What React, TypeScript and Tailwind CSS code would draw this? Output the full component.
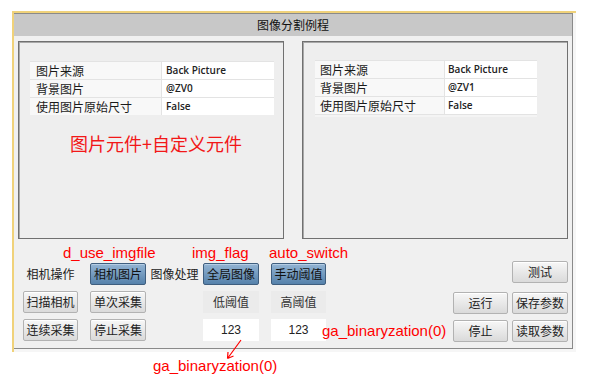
import React from "react";

const cjk = "font-['Noto_Sans_CJK_SC',sans-serif]";
const latin = "font-['Liberation_Sans','Noto_Sans_CJK_SC',sans-serif]";
const val = "font-['Open_Sans',sans-serif]";

function Btn({ children, blue, w = 55 }: { children: React.ReactNode; blue?: boolean; w?: number }) {
  const base = `h-[22px] flex items-center justify-center rounded-[2px] border text-[12px] leading-none ${cjk} bg-linear-to-b`;
  const color = blue
    ? "border-[#3f5e7e] from-[#93b4d3] to-[#5682ab] text-[#111] shadow-[inset_0_1px_0_#b4cde4]"
    : "border-[#b2b2b2] from-[#f7f7f7] to-[#dadada] text-[#222] shadow-[inset_0_1px_0_#ffffff]";
  return (
    <div className={`${base} ${color}`} style={{ width: w }}>
      {children}
    </div>
  );
}

function PropTable({ rows, nameW, width, pad, extra }: { rows: [string, string][]; nameW: number; width: number; pad: number; extra?: boolean }) {
  return (
    <div className="bg-[#e3e3e3] pt-[1px] flex flex-col gap-[1px]" style={{ width }}>
      {rows.map(([k, v]) => (
        <div key={k} className="flex h-[17px]">
          <div className={`bg-[#f8f8f8] text-[12px] leading-[17px] text-[#1a1a1a] ${cjk}`} style={{ width: nameW, paddingLeft: pad + 2 }}>
            {k}
          </div>
          <div className="w-[1px] bg-[#e3e3e3]" />
          <div className={`flex-1 bg-white text-[10px] font-semibold leading-[17px] text-[#222] ${val}`} style={{ paddingLeft: pad }}>
            {v}
          </div>
        </div>
      ))}
      {extra && <div className="h-[2px] overflow-hidden bg-[#f4f4f4]" />}
    </div>
  );
}

export default function App() {
  return (
    <div className="relative w-[596px] h-[382px] bg-white pl-[12px] pt-[11px]">
      <div className="w-[564px] h-[341px] border-t-2 border-l-2 border-[#f0d27a] bg-[#f6f6f6]">
        <div className="w-[559px] h-[336px] border-t border-r border-b border-[#8a8a8a] flex flex-col bg-[#f0f0f0]">
          <div className={`h-[22px] bg-[#c8c8c8] flex items-center justify-center text-[12px] text-[#111] ${cjk}`}>
            图像分割例程
          </div>
          <div className="flex flex-col pt-[5px] pl-[4px] pr-[4px]">
            <div className="flex gap-[18px]">
              <div className="w-[266px] h-[198px] border border-[#707070] shadow-[inset_1px_1px_0_#a8a8a8] bg-[#eeeeee] pl-[11px] pt-[19px] flex flex-col">
                <PropTable
                  width={244}
                  nameW={131}
                  pad={4}
                  rows={[
                    ["图片来源", "Back Picture"],
                    ["背景图片", "@ZV0"],
                    ["使用图片原始尺寸", "False"],
                  ]}
                />
                <div className={`mt-[18px] ml-[40px] text-[18px] leading-[20px] text-[#f21818] ${cjk}`}>
                  图片元件+自定义元件
                </div>
              </div>
              <div className="w-[266px] h-[198px] border border-[#707070] shadow-[inset_1px_1px_0_#a8a8a8] bg-[#eeeeee] pl-[12px] pt-[18px]">
                <PropTable
                  width={222}
                  nameW={129}
                  pad={3}
                  extra
                  rows={[
                    ["图片来源", "Back Picture"],
                    ["背景图片", "@ZV1"],
                    ["使用图片原始尺寸", "False"],
                  ]}
                />
              </div>
            </div>

            <div className="flex mt-[22px] pl-[5px]">
              <div className="mt-[2px] grid grid-cols-[67px_56px_57px_68px_55px] grid-rows-[22px_22px_22px] gap-y-[6px]">
                <div className={`w-[55px] flex items-center justify-center text-[12px] text-[#222] ${cjk}`}>相机操作</div>
                <Btn blue w={56}>相机图片</Btn>
                <div className={`flex items-center justify-center text-[12px] text-[#222] ${cjk}`}>图像处理</div>
                <Btn blue w={56}>全局图像</Btn>
                <Btn blue>手动阈值</Btn>

                <Btn>扫描相机</Btn>
                <Btn w={56}>单次采集</Btn>
                <div />
                <div className={`w-[56px] bg-[#ebebeb] flex items-center justify-center text-[12px] text-[#333] ${cjk}`}>低阈值</div>
                <div className={`w-[55px] bg-[#ebebeb] flex items-center justify-center text-[12px] text-[#333] ${cjk}`}>高阈值</div>

                <Btn>连续采集</Btn>
                <Btn w={56}>停止采集</Btn>
                <div />
                <div className={`w-[56px] bg-white flex items-center justify-center text-[12px] text-[#222] ${latin}`}>123</div>
                <div className={`w-[55px] bg-white flex items-center justify-center text-[12px] text-[#222] ${latin}`}>123</div>
              </div>
              <div className="flex-1" />
              <div className="flex flex-col">
                <div className="flex justify-end">
                  <Btn w={56}>测试</Btn>
                </div>
                <div className="flex gap-[4px] mt-[9px]">
                  <Btn>运行</Btn>
                  <Btn w={56}>保存参数</Btn>
                </div>
                <div className="flex gap-[4px] mt-[6px]">
                  <Btn>停止</Btn>
                  <Btn w={56}>读取参数</Btn>
                </div>
              </div>
            </div>
          </div>
        </div>
      </div>

      <div className={`absolute left-[63px] top-[245px] text-[15px] leading-[15px] text-[#ff0000] ${latin}`}>d_use_imgfile</div>
      <div className={`absolute left-[192px] top-[245px] text-[15px] leading-[15px] text-[#ff0000] ${latin}`}>img_flag</div>
      <div className={`absolute left-[269px] top-[245px] text-[15px] leading-[15px] text-[#ff0000] ${latin}`}>auto_switch</div>
      <div className={`absolute left-[322px] top-[323px] text-[15px] leading-[15px] text-[#ff0000] ${latin}`}>ga_binaryzation(0)</div>
      <div className={`absolute left-[153px] top-[358px] text-[15px] leading-[15px] text-[#ff0000] ${latin}`}>ga_binaryzation(0)</div>
      <svg className="absolute left-0 top-0 pointer-events-none" width="596" height="382" viewBox="0 0 596 382">
        <path d="M241 340 L227.5 358.5 M227.5 358.5 L228 352 M227.5 358.5 L233.5 356" stroke="#ff0000" strokeWidth="1.2" fill="none" />
      </svg>
    </div>
  );
}
